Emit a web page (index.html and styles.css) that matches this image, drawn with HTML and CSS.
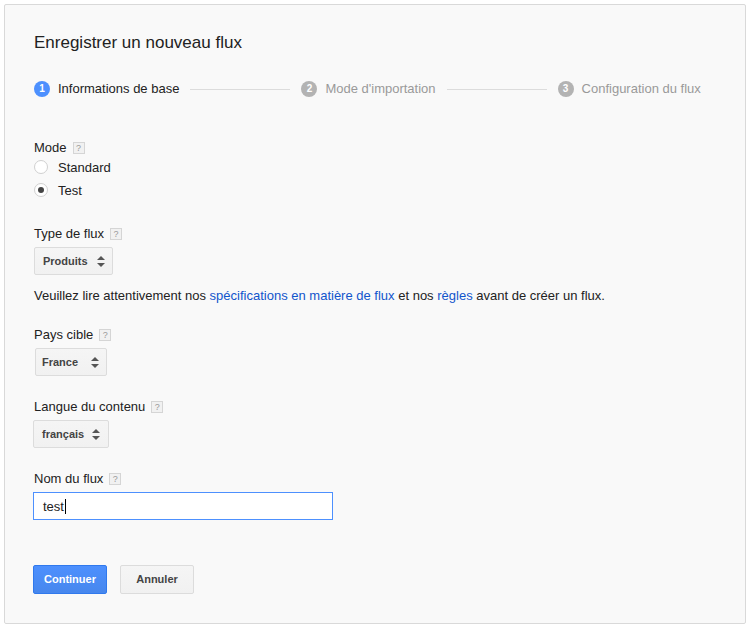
FILE: index.html
```html
<!DOCTYPE html>
<html lang="fr">
<head>
<meta charset="utf-8">
<title>Enregistrer un nouveau flux</title>
<link rel="stylesheet" href="styles.css">
</head>
<body>
<div class="panel">
  <h1 class="title">Enregistrer un nouveau flux</h1>

  <div class="stepper">
    <div class="step active"><span class="num">1</span><span class="step-label">Informations de base</span></div>
    <span class="step-line"></span>
    <div class="step"><span class="num">2</span><span class="step-label">Mode d'importation</span></div>
    <span class="step-line"></span>
    <div class="step"><span class="num">3</span><span class="step-label">Configuration du flux</span></div>
  </div>

  <div class="field mode">
    <div class="label">Mode <span class="help">?</span></div>
    <div class="radios">
      <div class="radio-row"><span class="radio"></span><span>Standard</span></div>
      <div class="radio-row"><span class="radio checked"></span><span>Test</span></div>
    </div>
  </div>

  <div class="field type">
    <div class="label">Type de flux <span class="help">?</span></div>
    <div class="select sel-produits"><span>Produits</span><span class="arrows"></span></div>
  </div>

  <p class="note">Veuillez lire attentivement nos <a href="#">spécifications en matière de flux</a> et nos <a href="#">règles</a> avant de créer un flux.</p>

  <div class="field">
    <div class="label">Pays cible <span class="help">?</span></div>
    <div class="select sel-france"><span>France</span><span class="arrows"></span></div>
  </div>

  <div class="field">
    <div class="label">Langue du contenu <span class="help">?</span></div>
    <div class="select sel-langue"><span>français</span><span class="arrows"></span></div>
  </div>

  <div class="field">
    <div class="label">Nom du flux <span class="help">?</span></div>
    <div class="input"><span>test</span><span class="caret"></span></div>
  </div>

  <div class="actions">
    <button class="btn primary">Continuer</button>
    <button class="btn">Annuler</button>
  </div>
</div>
</body>
</html>
```

FILE: styles.css
```css
html, body {
  margin: 0;
  padding: 0;
  background: #ffffff;
}
body {
  font-family: "Liberation Sans", Arial, sans-serif;
  font-size: 13px;
  color: #222;
}
.panel {
  box-sizing: border-box;
  margin: 4px 0 0 4px;
  width: 742px;
  height: 620px;
  border: 1px solid #d9d9d9;
  border-radius: 2px;
  background: #f9f9f9;
  padding: 26px 28px 0 29px;
}
.title {
  margin: 0;
  font-size: 17px;
  font-weight: normal;
  line-height: 24px;
  color: #222;
}
.stepper {
  display: flex;
  align-items: center;
  gap: 11px;
  margin-top: 26px;
  height: 16px;
}
.step {
  display: flex;
  align-items: center;
  gap: 8px;
  color: #999;
  line-height: 16px;
}
.step.active {
  color: #222;
}
.num {
  width: 16px;
  height: 16px;
  border-radius: 50%;
  background: #b3b3b3;
  color: #fff;
  font-size: 10px;
  font-weight: bold;
  line-height: 16px;
  text-align: center;
}
.step.active .num {
  background: #4d90fe;
}
.step-line {
  width: 100px;
  height: 1px;
  background: #dcdcdc;
}
.field {
  margin-top: 22px;
}
.field.mode {
  margin-top: 42px;
}
.field.type {
  margin-top: 25px;
}
.label {
  display: flex;
  align-items: flex-start;
  height: 16px;
  line-height: 18px;
}
.help {
  box-sizing: border-box;
  width: 12px;
  height: 12px;
  margin: 3px 0 0 6px;
  border: 1px solid #d5d5d5;
  background: #f1f1f1;
  color: #999;
  font-size: 9px;
  line-height: 10px;
  text-align: center;
}
.radios {
  display: flex;
  flex-direction: column;
  gap: 3px;
  margin-top: 2px;
}
.radio-row {
  display: flex;
  align-items: center;
  height: 20px;
  gap: 10px;
}
.radio {
  box-sizing: border-box;
  width: 14px;
  height: 14px;
  border-radius: 50%;
  border: 1px solid #d0d0d0;
  background: #fff;
  position: relative;
}
.radio.checked::after {
  content: "";
  position: absolute;
  left: 3px;
  top: 3px;
  width: 6px;
  height: 6px;
  border-radius: 50%;
  background: #444;
}
.select {
  box-sizing: border-box;
  display: flex;
  align-items: center;
  justify-content: space-between;
  height: 28px;
  margin-top: 6px;
  border: 1px solid #dcdcdc;
  border-radius: 2px;
  background: linear-gradient(#f5f5f5, #f1f1f1);
  font-size: 11px;
  font-weight: bold;
  color: #444;
  padding: 0 7px 0 8px;
}
.sel-produits { width: 79px; }
.sel-france { width: 72px; margin-left: 1px; padding-left: 6px; }
.sel-langue { width: 76px; margin-left: -1px; padding-left: 8px; padding-right: 8px; }
.arrows {
  position: relative;
  width: 8px;
  height: 11px;
}
.arrows::before,
.arrows::after {
  content: "";
  position: absolute;
  left: 0;
  border-left: 4px solid transparent;
  border-right: 4px solid transparent;
}
.arrows::before {
  top: 0;
  border-bottom: 4px solid #555;
}
.arrows::after {
  bottom: 0;
  border-top: 4px solid #555;
}
.note {
  margin: 13px 0 0 0;
  line-height: 16px;
}
.note a {
  color: #1155cc;
  text-decoration: none;
}
.input {
  box-sizing: border-box;
  display: flex;
  align-items: center;
  width: 300px;
  height: 28px;
  margin-top: 6px;
  margin-left: -1px;
  border: 1px solid #4d90fe;
  background: #fff;
  padding-left: 9px;
  font-size: 13px;
  color: #222;
}
.caret {
  width: 1px;
  height: 15px;
  background: #000;
  margin-left: 1px;
}
.actions {
  display: flex;
  gap: 13px;
  margin-top: 45px;
  margin-left: -1px;
}
.btn {
  box-sizing: border-box;
  width: 74px;
  height: 29px;
  border: 1px solid #dcdcdc;
  border-radius: 2px;
  background: linear-gradient(#f5f5f5, #f1f1f1);
  color: #444;
  font-family: "Liberation Sans", Arial, sans-serif;
  font-size: 11px;
  font-weight: bold;
  padding: 0 0 1px 0;
}
.btn.primary {
  border-color: #3079ed;
  background: linear-gradient(#4d90fe, #4787ed);
  color: #fff;
}
```
